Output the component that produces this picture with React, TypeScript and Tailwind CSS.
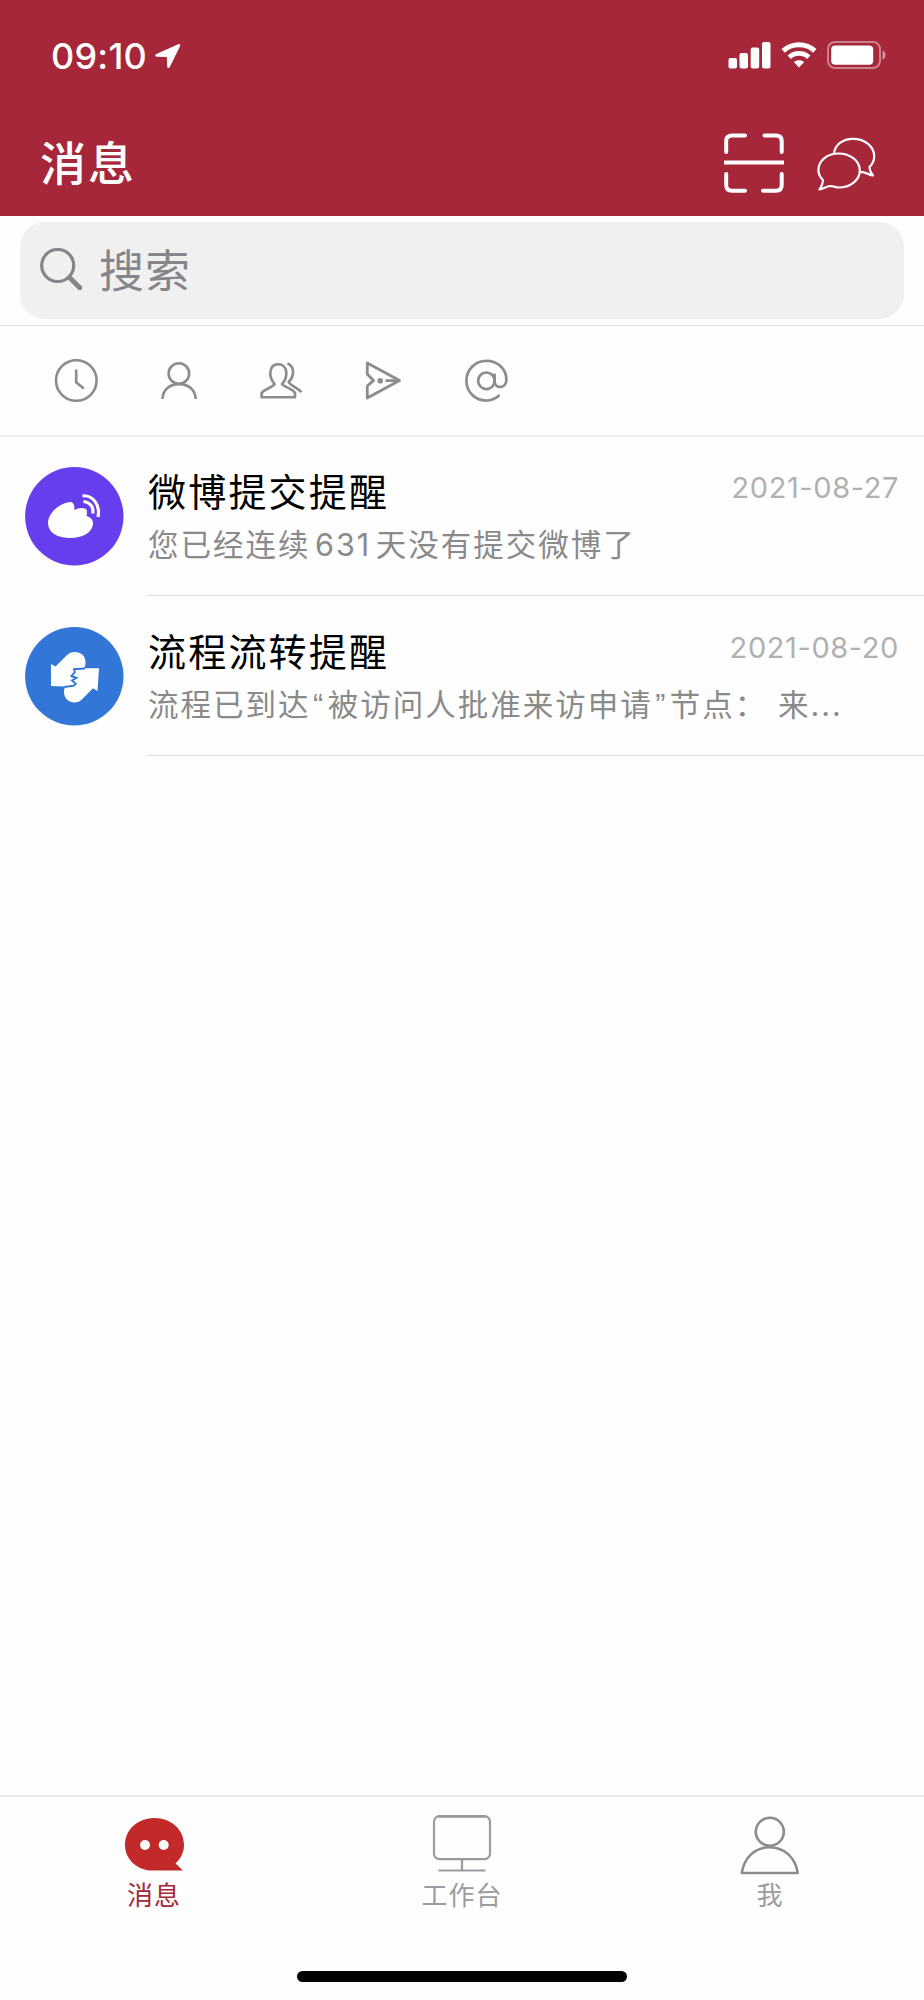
import type { ReactNode } from "react";

interface Message {
  id: number;
  title: string;
  preview: string;
  date: string;
  icon: ReactNode;
}

const messages: Message[] = [
  {
    id: 1,
    title: "微博提交提醒",
    preview: "您已经连续631天没有提交微博了",
    date: "2021-08-27",
    icon: <WeiboAvatar />,
  },
  {
    id: 2,
    title: "流程流转提醒",
    preview: "流程已到达“被访问人批准来访申请”节点： 来...",
    date: "2021-08-20",
    icon: <FlowAvatar />,
  },
];

export default function App() {
  return (
    <div className="flex h-[2000px] w-[924px] flex-col overflow-hidden bg-[#fefefe] font-[Inter,'Noto_Sans_CJK_SC',sans-serif]">
      <header className="h-[216px] shrink-0 bg-[#a6263a] text-white">
        <StatusBar />
        <div className="flex h-[106px] items-center pr-[48px] pl-[40px]">
          <h1 className="text-[46px] leading-none font-medium tracking-[2px]">消息</h1>
          <div className="ml-auto flex items-center gap-[33px]">
            <ScanIcon />
            <ChatsIcon />
          </div>
        </div>
      </header>

      <div className="h-[110px] shrink-0 border-b border-[#dedede] px-[20px] pt-[6px]">
        <div className="flex h-[97px] items-center gap-[15px] rounded-[25px] bg-[#f0f0f0] pl-[19px] text-[#86868a]">
          <SearchIcon />
          <span className="mt-[2px] text-[45px] leading-none tracking-[1px]">搜索</span>
        </div>
      </div>

      <FilterBar />

      <main className="-mt-px flex-1">
        {messages.map((message) => (
          <MessageRow key={message.id} message={message} />
        ))}
      </main>

      <TabBar />
    </div>
  );
}

function StatusBar() {
  return (
    <div className="flex h-[110px] items-center pr-[37px] pl-[51px]">
      <span className="mt-[1px] text-[36px] leading-none font-medium tracking-[0.2px]">09:10</span>
      <svg className="mt-[2px] ml-[8px]" width="26" height="26" viewBox="0 0 26 26" fill="currentColor">
        <path d="M23.2 1.2 1.3 11.1C-.4 12-.1 13.6 1.8 13.7L11.8 13.9 12.2 23.6C12.3 25.4 14 25.6 14.8 24L25 3.2C25.7 1.7 24.7.6 23.2 1.2Z" />
      </svg>
      <div className="ml-auto flex items-center">
        <svg width="43" height="28" viewBox="0 0 43 28" fill="currentColor">
          <rect x="0.5" y="17" width="8.5" height="10.5" rx="2" />
          <rect x="11.5" y="12" width="8.5" height="15.5" rx="2" />
          <rect x="22.7" y="6.5" width="8.5" height="21" rx="2" />
          <rect x="34" y="1" width="8.5" height="26.5" rx="2" />
        </svg>
        <svg className="ml-[10px]" width="36" height="28" viewBox="0 0 36 28" fill="none">
          <path d="M2.2 9.8C11 1.6 25 1.6 33.8 9.8" stroke="currentColor" strokeWidth="5" />
          <path d="M8.2 16.2C13.8 11.1 22.2 11.1 27.8 16.2" stroke="currentColor" strokeWidth="4.8" />
          <path d="M12.8 21C15.8 18.5 20.2 18.5 23.2 21L18 26.4Z" fill="currentColor" />
        </svg>
        <svg className="ml-[10px]" width="60" height="28" viewBox="0 0 60 28">
          <rect x="1" y="1" width="52" height="26" rx="7" fill="none" stroke="#fff" strokeOpacity="0.42" strokeWidth="2" />
          <rect x="4.2" y="4.5" width="42" height="19.2" rx="4" fill="#fff" />
          <path d="M55.5 9.5C59.6 11.3 59.6 17 55.5 18.7Z" fill="#fff" fillOpacity="0.5" />
        </svg>
      </div>
    </div>
  );
}

function ScanIcon() {
  return (
    <svg width="60" height="60" viewBox="0 0 60 60" fill="none" stroke="currentColor" strokeWidth="4" strokeLinecap="round">
      <path d="M21 2.4H8Q2.2 2.4 2.2 8V19" />
      <path d="M40.5 2.4H52Q57.7 2.4 57.7 8V19" />
      <path d="M2.2 41V52Q2.2 57.8 8 57.8H21" />
      <path d="M39 57.8H52Q57.7 57.8 57.7 52V41" />
      <path d="M0 29.4H60" strokeLinecap="butt" />
    </svg>
  );
}

function ChatsIcon() {
  return (
    <svg className="mt-[1px]" width="59" height="54" viewBox="0 0 59 54" fill="none" stroke="currentColor" strokeWidth="2.2" strokeLinejoin="round">
      <path d="M17 16.5C18 8 25.5 1.8 36 1.8C48 1.8 57.2 9.5 57.2 19.5C57.2 23.5 55.5 27 52.5 30C52.5 33 53.8 35.5 56 38.5C51.5 37.8 48 34.4 42.2 35" />
      <path d="M21.5 16.5C33.5 16.5 42.8 24 42.8 33.5C42.8 43 33.5 50.5 21.5 50.5C19 50.5 16.8 49.2 13 49C9.5 49 6 52.3 2.4 52.5C4.8 49 6 46 5.9 43C3 40 1.4 37 1.4 33C1.4 23.8 10 16.5 21.5 16.5Z" />
    </svg>
  );
}

function SearchIcon() {
  return (
    <svg width="45" height="45" viewBox="0 0 45 45" fill="none" stroke="currentColor" strokeLinecap="round">
      <circle cx="18.7" cy="17.5" r="16" strokeWidth="3.2" />
      <path d="M30.5 29.5 40.8 39.7" strokeWidth="5" />
    </svg>
  );
}

function FilterBar() {
  return (
    <div className="flex h-[111px] shrink-0 items-center gap-[58.5px] border-b-2 border-[#ececec] pl-[54px] text-[#8c8c8c]">
      <svg width="44" height="44" viewBox="0 0 44 44" fill="none" stroke="currentColor" strokeWidth="2.6">
        <circle cx="22.3" cy="21.5" r="20.3" />
        <path d="M22.2 10.5V23.3L29.8 29.5" />
      </svg>
      <svg width="44" height="44" viewBox="0 0 44 44" fill="none" stroke="currentColor" strokeWidth="2.6">
        <circle cx="21.9" cy="14.5" r="10.3" />
        <path d="M5.5 40C5.7 30.5 13 25.1 22 25.1S38.5 30.5 38.7 40" />
      </svg>
      <svg width="44" height="44" viewBox="0 0 44 44" fill="none" stroke="currentColor" strokeWidth="2.6" strokeLinejoin="round">
        <path d="M15.7 25.1C12 21 11 17.5 11.3 13.5C11.7 8 15 5.3 19.3 5.3S27 8 27.3 13.5C27.6 17.5 26.6 21 23 25.1C24 27.5 34.3 30 36 34V38.2H2.6V34C4.5 30.5 14.5 28 15.7 25.1Z" />
        <path d="M28.5 4.5C33 6.3 34.4 9.9 34 14.7C33.7 18.5 31.8 21 29.6 23.1C31.5 26.5 38 28.5 42.6 33.2" />
      </svg>
      <svg width="44" height="44" viewBox="0 0 44 44" fill="none" stroke="currentColor" strokeWidth="2.8" strokeLinejoin="round">
        <path d="M5.3 4 37.5 21.6 5.3 39V27L11.5 21.6 5.3 15.3Z" />
        <path d="M23.5 21.6H36" />
        <circle cx="18.2" cy="21.7" r="2.8" fill="currentColor" stroke="none" />
      </svg>
      <svg width="44" height="44" viewBox="0 0 44 44" fill="none" stroke="currentColor" strokeWidth="2.7" strokeLinecap="round">
        <circle cx="22.4" cy="21.8" r="8.3" />
        <path d="M30.6 15.5V22.5C30.6 30 42.4 30.2 42.4 21C42.4 10 33.8 1.9 22.4 1.9C11 1.9 2.4 10.8 2.4 21.7S11 41.6 22.2 41.6C27.4 41.6 31.5 39.7 34.8 36.8" />
      </svg>
    </div>
  );
}

function MessageRow({ message }: { message: Message }) {
  return (
    <div className="flex h-[160px]">
      <div className="w-[148px] shrink-0 pt-[31px] pl-[25px]">{message.icon}</div>
      <div className="min-w-0 flex-1 border-b border-[#dfdfdf] pt-[37px]">
        <div className="flex items-start justify-between pr-[25px]">
          <h2 className="text-[38px] leading-[38px] tracking-[2.2px] text-black">{message.title}</h2>
          <time className="text-[29px] leading-[29px] tracking-[0.6px] text-[#b0b0b0]">
            {message.date}
          </time>
        </div>
        <p className="mt-[18px] text-[30.5px] leading-[31px] tracking-[2px] whitespace-pre text-[#8a8a8a]">
          <Preview text={message.preview} />
        </p>
      </div>
    </div>
  );
}

// adds a little air around numbers and quotes set inside Chinese text
function Preview({ text }: { text: string }) {
  return text.split(/(\d+|[“”])/).map((part, i) => {
    if (/^\d+$/.test(part)) {
      return (
        <span key={i} className="mx-[4.5px]">
          {part}
        </span>
      );
    }
    if (part === "“" || part === "”") {
      return (
        <span key={i} className="mx-[2.5px] font-['Liberation_Sans',sans-serif]">
          {part}
        </span>
      );
    }
    return part;
  });
}

function WeiboAvatar() {
  return (
    <svg width="99" height="99" viewBox="0 0 99 99">
      <circle cx="49.3" cy="49.3" r="49.2" fill="#663eee" />
      <path
        d="M23 56C23 47 33 37 43.5 35.2C48.5 34.5 50 38 49.2 43C53 41 58 40.2 61 42C62.5 43.5 62 46 61.5 49C66 50.5 68.3 53 68 57C67 66 57 71 45 71S23 66 23 56Z"
        fill="#fff"
      />
      <path
        d="M58.5 34.5C65 35.3 69 40 67.7 46.5M57.5 28.8C68 28 75.5 38 73 50"
        fill="none"
        stroke="#fff"
        strokeWidth="3.2"
      />
    </svg>
  );
}

function FlowAvatar() {
  return (
    <svg width="99" height="99" viewBox="0 0 99 99">
      <circle cx="49.3" cy="49.3" r="49.2" fill="#3277d8" />
      <path
        d="M26 37 30.5 39.5 41.5 28.5C48 22 60.5 25 60.5 35C60.5 37.5 60.2 39.5 59 41.3H74L72.5 64 68 61.2 56 73.2C50 78 39.5 75 39 65.5C39 63 39.3 61.5 40.3 59.5L26 59Z"
        fill="#fff"
      />
      <path
        d="M60 41.5 49 42.2 49.8 45.3 46.3 49 51.5 51 47 53.5 50.8 56.8 48.8 58.7 39.5 60"
        fill="none"
        stroke="#3277d8"
        strokeWidth="1.9"
      />
    </svg>
  );
}

function TabBar() {
  return (
    <nav className="h-[205px] shrink-0 border-t-2 border-[#e8e8e8]">
      <div className="grid h-[174px] grid-cols-3 pt-[18px]">
        <Tab label="消息" className="text-[#a6263a]">
          <path
            d="M30.5 3C47 3 60 14.5 60 30C60 37 57 43.5 51.5 48.5L59 55.5H25C11 53.5 1 43 1 30C1 14.5 14 3 30.5 3Z"
            fill="#c22929"
          />
          <circle cx="21" cy="30" r="5" fill="#fff" />
          <circle cx="39.7" cy="30" r="5" fill="#fff" />
        </Tab>
        <Tab label="工作台" className="text-[#9b9b9f]">
          <g fill="none" stroke="currentColor" strokeWidth="2.2">
            <rect x="2" y="1.2" width="56" height="43" rx="5.5" />
            <path d="M6 1.4H54" strokeWidth="2.8" />
            <path d="M30 44V55.5M6.5 55.5H53.5" />
          </g>
        </Tab>
        <Tab label="我" className="text-[#9b9b9f]">
          <g fill="none" stroke="#8c8c8c" strokeWidth="2.6" strokeLinejoin="round">
            <circle cx="29.8" cy="16.8" r="14" />
            <path d="M1.8 58C4.1 42 15.6 32.2 29.6 32.2S55.5 42 57.7 58Z" />
          </g>
        </Tab>
      </div>
      <div className="mx-auto h-[11px] w-[330px] rounded-full bg-black" />
    </nav>
  );
}

function Tab({ label, className, children }: { label: string; className: string; children: ReactNode }) {
  return (
    <div className={`flex flex-col items-center ${className}`}>
      <svg width="61" height="61" viewBox="0 0 61 61">
        {children}
      </svg>
      <span className="mt-[7px] text-[26px] leading-[26px] tracking-[1px]">{label}</span>
    </div>
  );
}
